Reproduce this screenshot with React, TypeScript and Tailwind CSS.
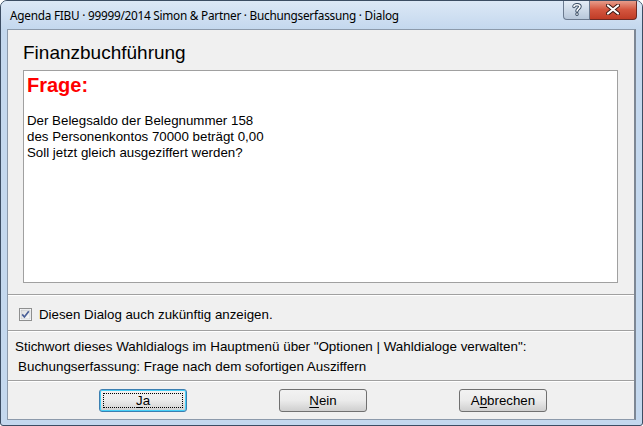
import React from "react";

const sans = "font-['Liberation_Sans',Arial,sans-serif]";

const Separator = () => (
  <div className="h-[2px] border-t border-[#a0a0a0] border-b border-b-white" />
);

const DialogButton = ({
  hotkey,
  rest,
  focused,
  lead = "",
}: {
  hotkey: string;
  rest: string;
  focused?: boolean;
  lead?: string;
}) => (
  <button
    className={`relative w-[88px] h-[23px] rounded-[3px] border ${
      focused ? "border-[#3c7fb1] shadow-[inset_0_0_0_1px_#48d0f8]" : "border-[#707070]"
    } bg-gradient-to-b from-[#f2f2f2] via-[#ebebeb] to-[#cfcfcf] text-[13.3px] text-black ${sans} leading-none`}
  >
    {focused && (
      <span className="absolute inset-[3px] border border-dotted border-black" />
    )}
    {lead}
    <span className="underline underline-offset-2">{hotkey}</span>
    {rest}
  </button>
);

export default function App() {
  return (
    <div className="w-[643px] h-[426px] bg-white">
      <div className="w-[643px] h-[426px] border border-[#3c4d63] rounded-t-[7px] rounded-b-[3px] bg-[#c4d8ee] flex flex-col px-[6px] pb-[5px] overflow-hidden">
        {/* Title bar */}
        <div className="h-[28px] flex items-start -mx-[6px] bg-gradient-to-b from-[#dce8f6] to-[#c4d8ee]">
          <div className="flex-1 pl-[9px] pt-[6px] text-[11.8px] leading-[16px] text-black font-['Noto_Sans',sans-serif] tracking-[-0.25px] whitespace-nowrap">
            Agenda FIBU · 99999/2014 Simon &amp; Partner · Buchungserfassung · Dialog
          </div>
          <div className="flex mr-[5px] -mt-px">
            <div className="w-[27px] h-[20px] rounded-bl-[4px] border border-[#6b7a8f] border-t-0 bg-gradient-to-b from-[#e7eef7] via-[#cfdbe9] to-[#b7c7da] flex items-center justify-center">
              <svg width="10" height="13" viewBox="0 0 10 13">
                <path
                  d="M2 3.6 C2 1.2 8 1.2 8 3.6 C8 5.6 5 5.6 5 8 M5 11 L5 11.2"
                  fill="none"
                  stroke="#34475f"
                  strokeWidth="3.4"
                  strokeLinecap="round"
                />
                <path
                  d="M2 3.6 C2 1.2 8 1.2 8 3.6 C8 5.6 5 5.6 5 8 M5 11 L5 11.2"
                  fill="none"
                  stroke="#ffffff"
                  strokeWidth="1.6"
                  strokeLinecap="round"
                />
              </svg>
            </div>
            <div className="w-[47px] h-[20px] rounded-br-[4px] border border-[#6e2a24] border-t-0 border-l-0 bg-gradient-to-b from-[#e8a493] via-[#d4563f] to-[#c03c26] flex items-center justify-center">
              <svg width="14" height="11" viewBox="0 0 14 11">
                <path
                  d="M2 1.5 L12 9.5 M12 1.5 L2 9.5"
                  stroke="#3b1712"
                  strokeWidth="4"
                  strokeLinecap="round"
                />
                <path
                  d="M2 1.5 L12 9.5 M12 1.5 L2 9.5"
                  stroke="#ffffff"
                  strokeWidth="2.2"
                  strokeLinecap="round"
                />
              </svg>
            </div>
          </div>
        </div>

        {/* Client area */}
        <div className={`flex-1 border border-[#8c9aab] border-r-2 border-r-[#7d8794] bg-[#f0f0f0] flex flex-col ${sans}`}>
          <div className="h-[264px] flex flex-col">
            <div className="pl-[15px] pt-[12px] text-[19px] leading-[22px] text-black">
              Finanzbuchführung
            </div>
            <div className="mt-[6px] ml-[15px] w-[595px] h-[213px] bg-white border border-[#a0a0a0] pl-[3px]">
              <div className="pt-[3px] text-[20px] leading-[23px] font-bold text-[#ff0000]">
                Frage:
              </div>
              <div className="mt-[16px] text-[13.3px] leading-[16px] text-black">
                <div>Der Belegsaldo der Belegnummer 158</div>
                <div>des Personenkontos 70000 beträgt 0,00</div>
                <div>Soll jetzt gleich ausgeziffert werden?</div>
              </div>
            </div>
          </div>

          <Separator />

          <div className="h-[34px] flex items-center pt-[3px] pl-[11px] gap-[7px] text-[13.3px] text-black">
            <svg width="13" height="13" viewBox="0 0 13 13">
              <defs>
                <linearGradient id="cb" x1="0" y1="0" x2="1" y2="1">
                  <stop offset="0" stopColor="#dcdcdc" />
                  <stop offset="1" stopColor="#fbfbfb" />
                </linearGradient>
              </defs>
              <rect x="0.5" y="0.5" width="12" height="12" fill="#ffffff" stroke="#8e8f8f" />
              <rect x="2" y="2" width="9" height="9" fill="url(#cb)" stroke="#b0b4bb" strokeWidth="0.5" />
              <path d="M3.2 6.4 L5.4 9 L9.8 3.2" fill="none" stroke="#4a5f97" strokeWidth="1.7" />
            </svg>
            <span>Diesen Dialog auch zukünftig anzeigen.</span>
          </div>

          <Separator />

          <div className="pt-[7px] text-[13.4px] leading-[16px] text-black">
            <div className="pl-[7px]">
              Stichwort dieses Wahldialogs im Hauptmenü über "Optionen | Wahldialoge verwalten":
            </div>
            <div className="pl-[10px] mt-[4px]">
              Buchungserfassung: Frage nach dem sofortigen Ausziffern
            </div>
          </div>

          <div className="mt-[5px]">
            <Separator />
          </div>

          <div className="flex justify-center gap-[92px] pt-[7px] pl-[4px]">
            <DialogButton hotkey="J" rest="a" focused />
            <DialogButton hotkey="N" rest="ein" />
            <DialogButton lead="A" hotkey="b" rest="brechen" />
          </div>
        </div>
      </div>
    </div>
  );
}
